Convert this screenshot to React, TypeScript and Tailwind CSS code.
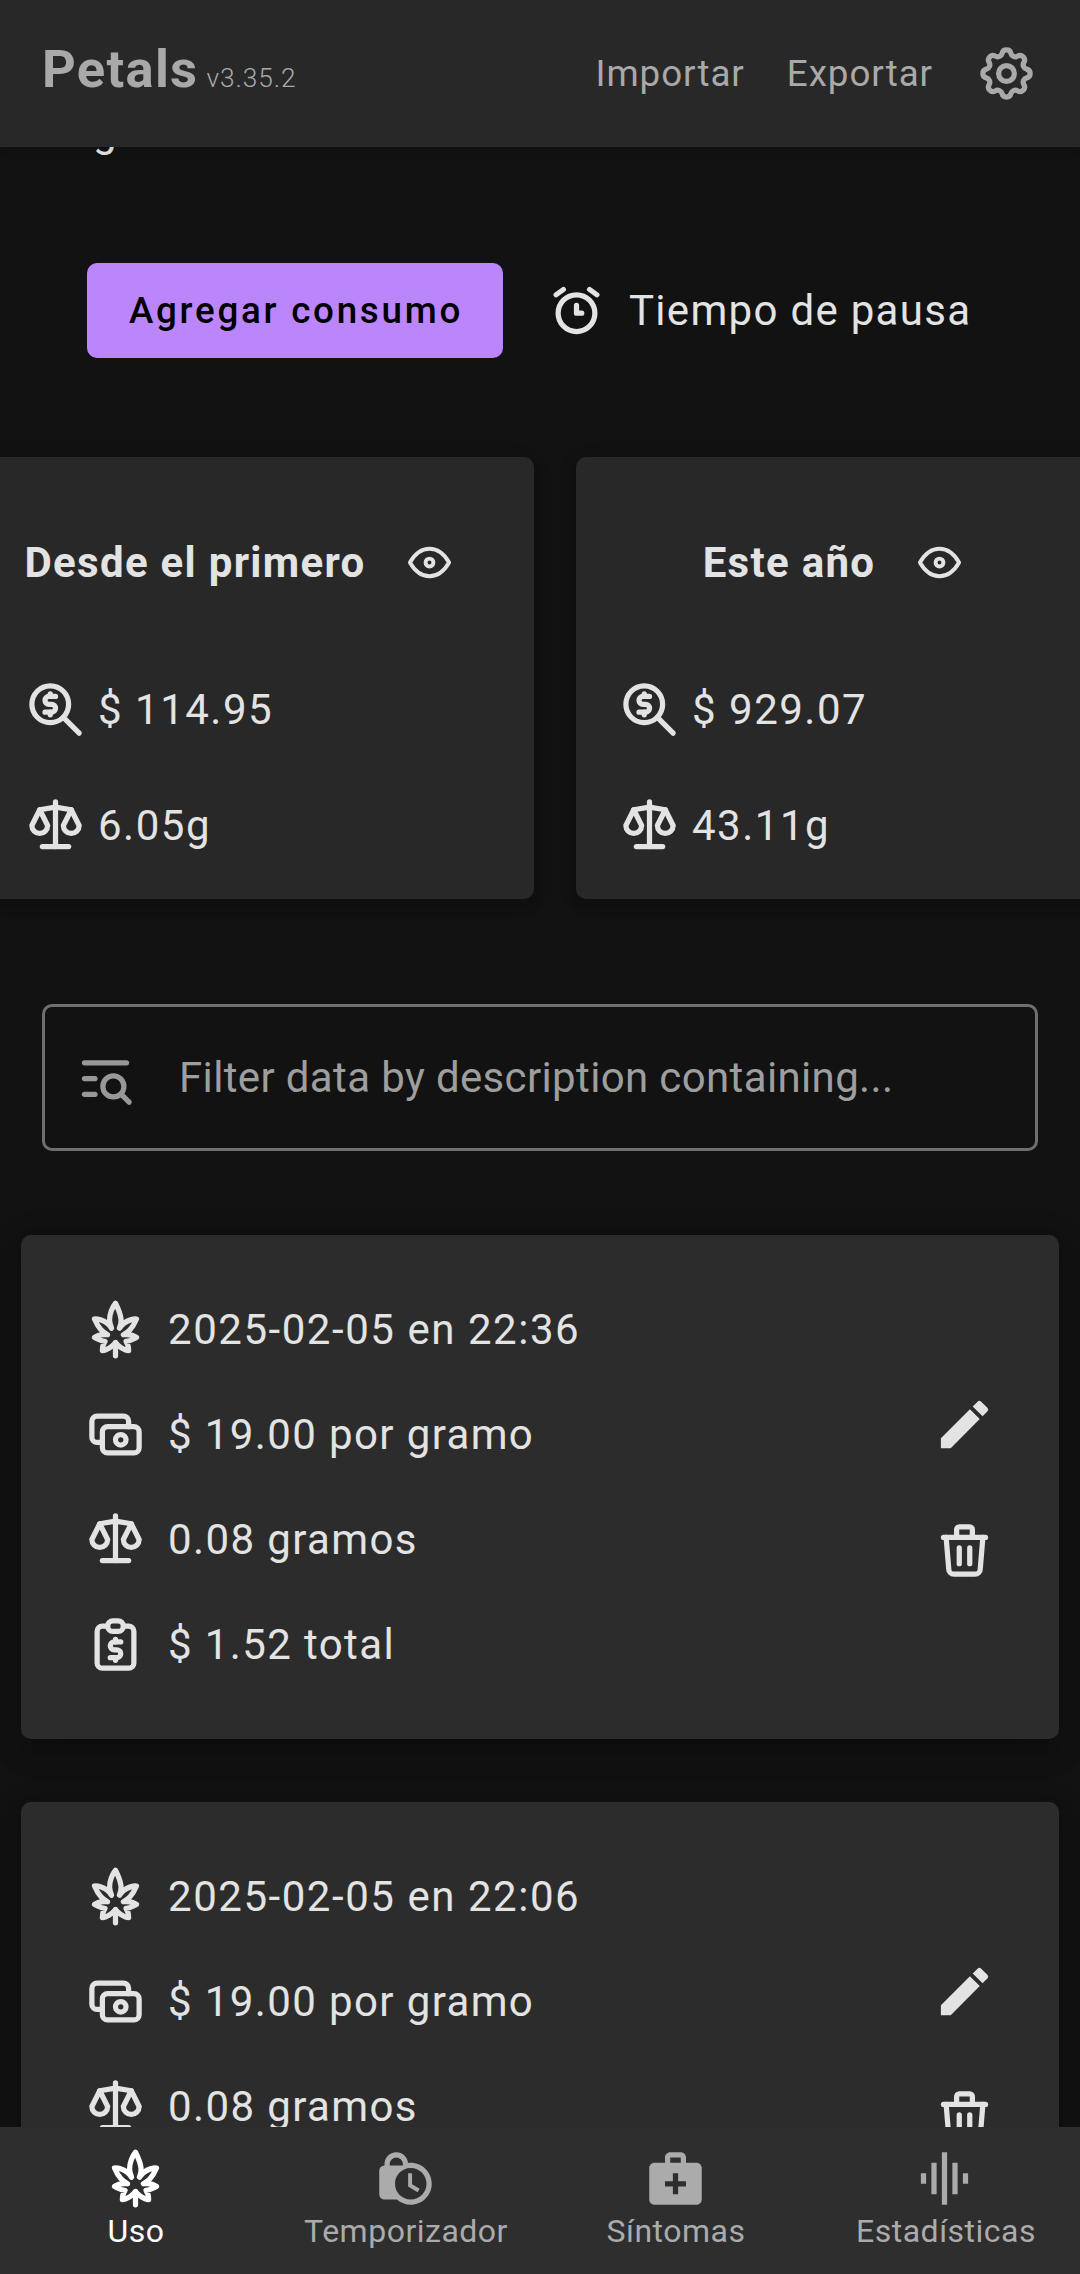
import type { ReactNode } from 'react';
import {
  TbAlarm,
  TbCannabis,
  TbCash,
  TbListSearch,
  TbReportMoney,
  TbScale,
  TbSettings,
  TbTrash,
  TbZoomMoney,
} from 'react-icons/tb';
import { MdEdit, MdGraphicEq, MdLockClock, MdMedicalServices } from 'react-icons/md';

const ICON = 'size-[63px] shrink-0';

function Eye() {
  return (
    <svg
      viewBox="0 0 24 24"
      className="size-[47px]"
      fill="none"
      stroke="currentColor"
      strokeWidth="2"
      strokeLinecap="round"
      strokeLinejoin="round"
    >
      <circle cx="12" cy="12" r="2" />
      <path d="M22 12c-2.667 4.667-6 7-10 7s-7.333-2.333-10-7c2.667-4.667 6-7 10-7s7.333 2.333 10 7" />
    </svg>
  );
}

function Summary({ title, money, weight }: { title: string; money: string; weight: string }) {
  return (
    <section className="flex h-[442px] w-[552px] shrink-0 flex-col rounded-[10px] bg-[#282828] px-[42px] pt-[42px] shadow-[0_5px_10px_-3px_rgba(0,0,0,.1),0_8px_13px_rgba(0,0,0,.06),0_3px_26px_rgba(0,0,0,.05)]">
      <div className="flex h-[126px] items-center justify-center pl-[2px]">
        <h2 className="font-bold whitespace-nowrap">{title}</h2>
        <button className="flex h-[126px] w-[128px] shrink-0 items-center justify-center">
          <Eye />
        </button>
      </div>
      <div className="mt-[53px] flex h-[63px] items-center gap-[11px] tracking-[1.5px]">
        <TbZoomMoney className={ICON} />
        <span>{money}</span>
      </div>
      <div className="mt-[53px] flex h-[63px] items-center gap-[11px] tracking-[1.5px]">
        <TbScale className={ICON} />
        <span>{weight}</span>
      </div>
    </section>
  );
}

function Line({ icon, children }: { icon: ReactNode; children: ReactNode }) {
  return (
    <li className="flex h-[63px] items-center gap-[21px] tracking-[1.38px]">
      {icon}
      {children}
    </li>
  );
}

function Entry({ date }: { date: string }) {
  return (
    <article className="flex h-[504px] shrink-0 items-center justify-between rounded-[10px] bg-[#2c2c2c] pr-[32px] pl-[63px] shadow-[0_13px_13px_-8px_rgba(0,0,0,.16),0_16px_26px_2px_rgba(0,0,0,.1),0_8px_37px_5px_rgba(0,0,0,.08)]">
      <ul className="flex flex-col gap-[42px]">
        <Line icon={<TbCannabis className={ICON} />}>
          <span className="tracking-[1.54px]">{date}</span>
        </Line>
        <Line icon={<TbCash className={ICON} />}>
          <span>$ 19.00 por gramo</span>
        </Line>
        <Line icon={<TbScale className={ICON} />}>
          <span>0.08 gramos</span>
        </Line>
        <Line icon={<TbReportMoney className={ICON} />}>
          <span>$ 1.52 total</span>
        </Line>
      </ul>
      <div className="flex flex-col">
        <button className="flex size-[126px] items-center justify-center">
          <MdEdit className={ICON} />
        </button>
        <button className="flex size-[126px] items-center justify-center">
          <TbTrash className={ICON} />
        </button>
      </div>
    </article>
  );
}

function Tab({ icon, label, active }: { icon: ReactNode; label: string; active?: boolean }) {
  return (
    <button
      className={`flex w-[270px] flex-col items-center pt-5 text-[32px] leading-[42px] tracking-[0.5px] ${
        active ? 'text-white' : 'text-[#ababab]'
      }`}
    >
      {icon}
      <span className="pl-[2px]">{label}</span>
    </button>
  );
}

export default function App() {
  return (
    <div className="flex h-[2274px] w-[1080px] flex-col overflow-hidden bg-[#121212] font-[Roboto,sans-serif] text-[42px] leading-[63px] tracking-[1.3px] text-[#e3e3e3]">
      <header className="relative z-10 flex h-[147px] shrink-0 items-center justify-between bg-[#282828] px-[42px] text-[#a9a9a9] shadow-[0_5px_10px_-3px_rgba(0,0,0,.12)]">
        <div className="flex items-baseline gap-[8px]">
          <h1 className="text-[52.5px] font-bold tracking-[1.3px]">Petals</h1>
          <span className="text-[26.25px] font-light tracking-[0.95px]">v3.35.2</span>
        </div>
        <div className="flex items-center text-[36.75px] tracking-[0.96px]">
          <span className="mr-[42px]">Importar</span>
          <span className="mr-[42px]">Exportar</span>
          <TbSettings className={ICON} />
        </div>
      </header>

      <main className="flex min-h-0 flex-1 flex-col overflow-hidden">
        <p className="-mt-[47px] h-[63px] shrink-0 pl-[93px]">g</p>

        <div className="mt-[100px] flex h-[95px] shrink-0 items-center pl-[87px]">
          <button className="h-[95px] w-[416px] rounded-[10px] bg-[#bb86fc] pl-[2px] text-[36.75px] font-medium tracking-[2.74px] whitespace-nowrap text-black">
            Agregar consumo
          </button>
          <TbAlarm className="ml-[42px] size-[63px] shrink-0" />
          <span className="ml-[21px]">Tiempo de pausa</span>
        </div>

        <div className="mt-[99px] -ml-[18px] flex shrink-0 gap-[42px]">
          <Summary title="Desde el primero" money="$ 114.95" weight="6.05g" />
          <Summary title="Este año" money="$ 929.07" weight="43.11g" />
        </div>

        <label className="mx-[42px] mt-[105px] flex h-[147px] shrink-0 items-center rounded-[10px] border-[3px] border-[#707070] pl-[29px] text-[#9e9e9e]">
          <TbListSearch className="mt-[2px] mr-[42px] size-[63px] shrink-0 text-[#989898]" />
          <span className="tracking-[0.36px]">Filter data by description containing...</span>
        </label>

        <div className="mx-[21px] mt-[84px] flex shrink-0 flex-col gap-[63px]">
          <Entry date="2025-02-05 en 22:36" />
          <Entry date="2025-02-05 en 22:06" />
        </div>
      </main>

      <nav className="relative z-10 flex h-[147px] shrink-0 bg-[#2e2e2e]">
        <Tab active label="Uso" icon={<TbCannabis className={ICON} />} />
        <Tab label="Temporizador" icon={<MdLockClock className={ICON} />} />
        <Tab label="Síntomas" icon={<MdMedicalServices className={ICON} />} />
        <Tab label="Estadísticas" icon={<MdGraphicEq className="mr-[2px] size-[63px] shrink-0" />} />
      </nav>
    </div>
  );
}
